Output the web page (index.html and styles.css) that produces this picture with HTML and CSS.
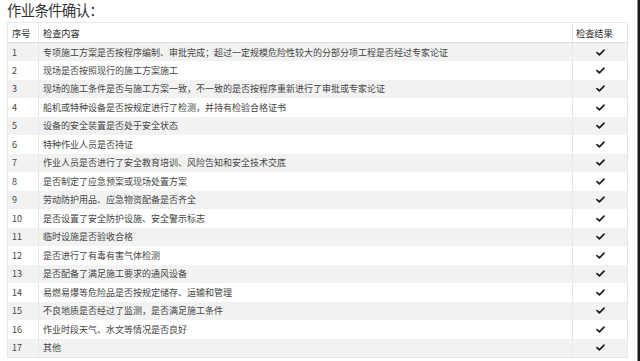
FILE: index.html
```html
<!DOCTYPE html>
<html lang="zh-CN">
<head>
<meta charset="utf-8">
<link rel="stylesheet" href="styles.css">
</head>
<body>
<div class="page">
  <main class="content">
    <h1 class="title">作业条件确认：</h1>
    <table class="checks">
      <thead>
        <tr><th class="c-no">序号</th><th class="c-item">检查内容</th><th class="c-res">检查结果</th></tr>
      </thead>
      <tbody>
        <tr><td class="c-no">1</td><td class="c-item">专项施工方案是否按程序编制、审批完成；超过一定规模危险性较大的分部分项工程是否经过专家论证</td><td class="c-res"><svg class="tick" viewBox="0 0 9 7"><path d="M1 3.6 L3.4 5.9 L8 1.2"/></svg></td></tr>
        <tr><td class="c-no">2</td><td class="c-item">现场是否按照现行的施工方案施工</td><td class="c-res"><svg class="tick" viewBox="0 0 9 7"><path d="M1 3.6 L3.4 5.9 L8 1.2"/></svg></td></tr>
        <tr><td class="c-no">3</td><td class="c-item">现场的施工条件是否与施工方案一致，不一致的是否按程序重新进行了审批或专家论证</td><td class="c-res"><svg class="tick" viewBox="0 0 9 7"><path d="M1 3.6 L3.4 5.9 L8 1.2"/></svg></td></tr>
        <tr><td class="c-no">4</td><td class="c-item">船机或特种设备是否按规定进行了检测，并持有检验合格证书</td><td class="c-res"><svg class="tick" viewBox="0 0 9 7"><path d="M1 3.6 L3.4 5.9 L8 1.2"/></svg></td></tr>
        <tr><td class="c-no">5</td><td class="c-item">设备的安全装置是否处于安全状态</td><td class="c-res"><svg class="tick" viewBox="0 0 9 7"><path d="M1 3.6 L3.4 5.9 L8 1.2"/></svg></td></tr>
        <tr><td class="c-no">6</td><td class="c-item">特种作业人员是否持证</td><td class="c-res"><svg class="tick" viewBox="0 0 9 7"><path d="M1 3.6 L3.4 5.9 L8 1.2"/></svg></td></tr>
        <tr><td class="c-no">7</td><td class="c-item">作业人员是否进行了安全教育培训、风险告知和安全技术交底</td><td class="c-res"><svg class="tick" viewBox="0 0 9 7"><path d="M1 3.6 L3.4 5.9 L8 1.2"/></svg></td></tr>
        <tr><td class="c-no">8</td><td class="c-item">是否制定了应急预案或现场处置方案</td><td class="c-res"><svg class="tick" viewBox="0 0 9 7"><path d="M1 3.6 L3.4 5.9 L8 1.2"/></svg></td></tr>
        <tr><td class="c-no">9</td><td class="c-item">劳动防护用品、应急物资配备是否齐全</td><td class="c-res"><svg class="tick" viewBox="0 0 9 7"><path d="M1 3.6 L3.4 5.9 L8 1.2"/></svg></td></tr>
        <tr><td class="c-no">10</td><td class="c-item">是否设置了安全防护设施、安全警示标志</td><td class="c-res"><svg class="tick" viewBox="0 0 9 7"><path d="M1 3.6 L3.4 5.9 L8 1.2"/></svg></td></tr>
        <tr><td class="c-no">11</td><td class="c-item">临时设施是否验收合格</td><td class="c-res"><svg class="tick" viewBox="0 0 9 7"><path d="M1 3.6 L3.4 5.9 L8 1.2"/></svg></td></tr>
        <tr><td class="c-no">12</td><td class="c-item">是否进行了有毒有害气体检测</td><td class="c-res"><svg class="tick" viewBox="0 0 9 7"><path d="M1 3.6 L3.4 5.9 L8 1.2"/></svg></td></tr>
        <tr><td class="c-no">13</td><td class="c-item">是否配备了满足施工要求的通风设备</td><td class="c-res"><svg class="tick" viewBox="0 0 9 7"><path d="M1 3.6 L3.4 5.9 L8 1.2"/></svg></td></tr>
        <tr><td class="c-no">14</td><td class="c-item">易燃易爆等危险品是否按规定储存、运输和管理</td><td class="c-res"><svg class="tick" viewBox="0 0 9 7"><path d="M1 3.6 L3.4 5.9 L8 1.2"/></svg></td></tr>
        <tr><td class="c-no">15</td><td class="c-item">不良地质是否经过了监测，是否满足施工条件</td><td class="c-res"><svg class="tick" viewBox="0 0 9 7"><path d="M1 3.6 L3.4 5.9 L8 1.2"/></svg></td></tr>
        <tr><td class="c-no">16</td><td class="c-item">作业时段天气、水文等情况是否良好</td><td class="c-res"><svg class="tick" viewBox="0 0 9 7"><path d="M1 3.6 L3.4 5.9 L8 1.2"/></svg></td></tr>
        <tr><td class="c-no">17</td><td class="c-item">其他</td><td class="c-res"><svg class="tick" viewBox="0 0 9 7"><path d="M1 3.6 L3.4 5.9 L8 1.2"/></svg></td></tr>
      </tbody>
    </table>
  </main>
  <div class="edge"></div>
</div>
</body>
</html>
```

FILE: styles.css
```css
* { box-sizing: border-box; }
html, body { margin: 0; padding: 0; background: #fff; }
body {
  font-family: "Noto Sans CJK SC", "Noto Sans", sans-serif;
  color: #444;
  width: 640px;
  height: 361px;
  overflow: hidden;
}
.page {
  display: flex;
  height: 361px;
}
.content {
  flex: 1;
  padding: 0 9px 0 7px;
}
.edge {
  width: 4px;
  background: #1c1c1c;
  border-left: 1px solid #8a8a8a;
}
.title {
  margin: 0;
  height: 22px;
  font-size: 14.5px;
  line-height: 20px;
  font-weight: normal;
  color: #333;
  letter-spacing: -0.8px;
}
.checks {
  width: 620px;
  border-collapse: collapse;
  table-layout: fixed;
  font-size: 9px;
  border: 1px solid #e6e6e6;
}
.checks th, .checks td {
  padding: 0 0 0 4px;
  text-align: left;
  white-space: nowrap;
  border-left: 1px solid #e8e8e8;
  border-right: 1px solid #e8e8e8;
}
.checks thead tr { height: 20px; }
.checks th {
  font-weight: normal;
  color: #2a2a2a;
  font-size: 9.2px;
  border-bottom: 1px solid #dcdcdc;
  border-top: 1px solid #eaeaea;
}
.checks tbody tr { height: 18.5px; }
.checks tbody tr:nth-child(odd) { background: #f2f2f2; }
.checks tbody tr:nth-child(even) { background: #fff; }
.c-no { width: 31px; }
.c-item { width: 534px; }
.checks .c-res { width: 55px; }
.checks td.c-res {
  text-align: center;
  padding: 0 0 0 1px;
  line-height: 0;
}
.checks th.c-res { padding-left: 3px; }
.tick {
  width: 9px;
  height: 7px;
  vertical-align: middle;
}
.tick path {
  fill: none;
  stroke: #1e1e1e;
  stroke-width: 1.7;
  stroke-linecap: round;
  stroke-linejoin: round;
}
```
